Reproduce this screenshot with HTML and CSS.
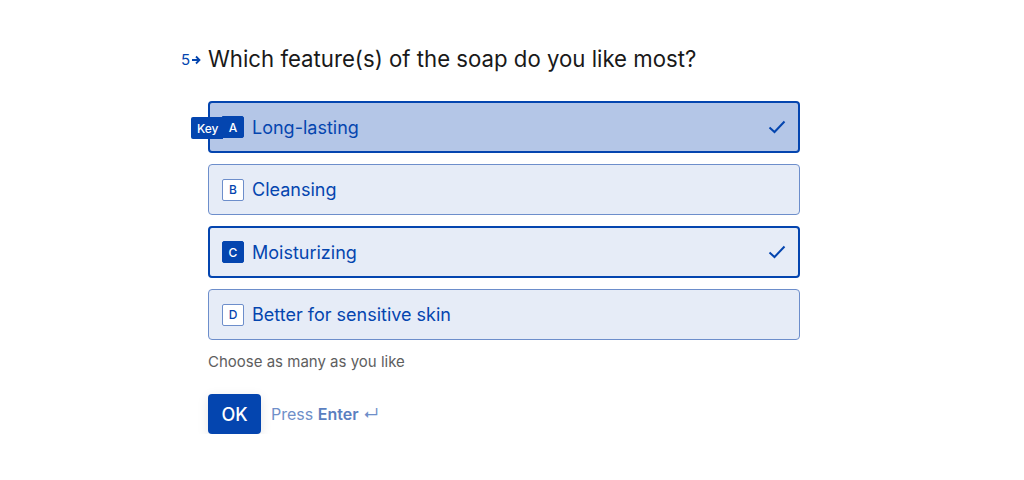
FILE: index.html
```html
<!DOCTYPE html>
<html lang="en">
<head>
  <meta charset="UTF-8">
  <title>Question 5</title>
  <link rel="stylesheet" href="styles.css">
</head>
<body>
  <div class="question">
    <h1 class="title">
      <span class="num">5<svg width="11" height="10" viewBox="0 0 11 10"><path d="M1 5h7M5 1.5 8.5 5 5 8.5" fill="none" stroke="#0445af" stroke-width="1.8"/></svg></span>
      Which feature(s) of the soap do you like most?
    </h1>

    <div class="options">
      <div class="option selected hover">
        <span class="hint">Key</span>
        <span class="letter">A</span>
        <span class="label">Long-lasting</span>
        <svg class="check" width="18" height="14" viewBox="0 0 18 14"><path d="M1.5 7.5 6.5 12 16.5 1.5" fill="none" stroke="#0445af" stroke-width="2"/></svg>
      </div>
      <div class="option">
        <span class="letter">B</span>
        <span class="label">Cleansing</span>
      </div>
      <div class="option selected">
        <span class="letter">C</span>
        <span class="label">Moisturizing</span>
        <svg class="check" width="18" height="14" viewBox="0 0 18 14"><path d="M1.5 7.5 6.5 12 16.5 1.5" fill="none" stroke="#0445af" stroke-width="2"/></svg>
      </div>
      <div class="option">
        <span class="letter">D</span>
        <span class="label">Better for sensitive skin</span>
      </div>
    </div>

    <p class="help">Choose as many as you like</p>

    <div class="actions">
      <button type="button">OK</button>
      <span class="press">Press <b>Enter</b> ↵</span>
    </div>
  </div>
</body>
</html>
```

FILE: styles.css
```css
body {
  margin: 0;
  background: #fff;
  font-family: Inter, "Noto Sans", sans-serif;
}

.question {
  width: 592px;
  margin: 0 0 0 208px;
  padding-top: 44px;
}

.title {
  position: relative;
  margin: 0 0 27px;
  font-size: 22.2px;
  font-weight: 400;
  line-height: 30px;
  color: #191919;
}

.num {
  position: absolute;
  left: -27px;
  top: 1px;
  display: flex;
  align-items: center;
  gap: 1px;
  font-size: 15px;
  color: #0445af;
}

.options {
  display: flex;
  flex-direction: column;
  gap: 11px;
}

.option {
  position: relative;
  display: flex;
  align-items: center;
  height: 51px;
  padding: 0 13px;
  box-sizing: border-box;
  background: #e6ecf7;
  border: 1px solid #6d8ecb;
  border-radius: 4px;
  color: #0445af;
}

.option.selected {
  border: 2px solid #0445af;
  padding: 0 12px;
  height: 52px;
}

.option.hover {
  background: #b4c6e7;
}

.letter {
  width: 22px;
  height: 22px;
  box-sizing: border-box;
  display: flex;
  align-items: center;
  justify-content: center;
  margin-right: 8px;
  background: #fff;
  border: 1px solid #6d8ecb;
  border-radius: 2px;
  font-size: 12px;
  font-weight: 500;
}

.selected .letter {
  background: #0445af;
  border-color: #0445af;
  color: #fff;
}

.hover .letter {
  border-radius: 0 2px 2px 0;
}

.hint {
  position: absolute;
  left: -19px;
  top: 14px;
  height: 22px;
  width: 32px;
  padding-left: 6px;
  box-sizing: border-box;
  display: flex;
  align-items: center;
  background: #0445af;
  border-radius: 2px 0 0 2px;
  color: #fff;
  font-size: 12px;
  font-weight: 500;
}

.label {
  font-size: 18px;
  font-weight: 400;
}

.check {
  margin-left: auto;
  margin-right: 0;
}

.help {
  margin: 12px 0 0;
  font-size: 15px;
  line-height: 20px;
  color: #5e5e5e;
}

.actions {
  display: flex;
  align-items: center;
  gap: 10px;
  margin-top: 22px;
}

button {
  width: 53px;
  height: 40px;
  border: none;
  border-radius: 4px;
  background: #0445af;
  color: #fff;
  font-family: inherit;
  font-size: 18px;
  font-weight: 500;
  box-shadow: 0 3px 12px rgba(0, 0, 0, 0.1);
}

.press {
  font-size: 16px;
  color: #6f8fc9;
}

.press b {
  font-weight: 600;
  color: #5b7fc0;
}
```
